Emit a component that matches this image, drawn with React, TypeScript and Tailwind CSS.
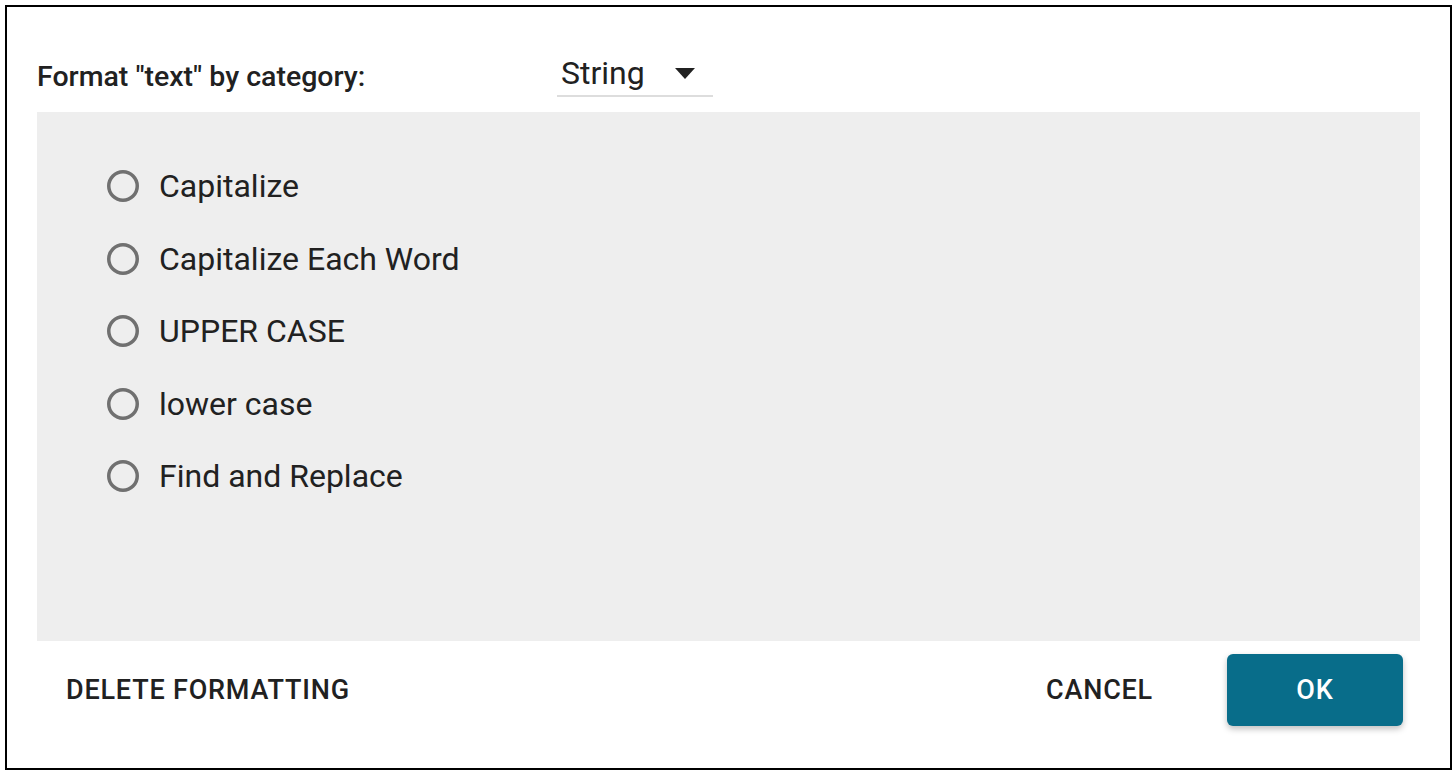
const options = ['Capitalize', 'Capitalize Each Word', 'UPPER CASE', 'lower case', 'Find and Replace'];

function RadioCircle() {
  return (
    <svg width="32" height="32" viewBox="0 0 32 32" className="shrink-0">
      <circle cx="16" cy="16" r="14.25" fill="none" stroke="#707070" strokeWidth="3.5" />
    </svg>
  );
}

export default function App() {
  return (
    <div
      className="h-screen w-full bg-white p-[5px] text-[#212121]"
      style={{ fontFamily: 'Roboto, "Liberation Sans", sans-serif' }}
    >
      <div className="flex h-[765px] w-[1447px] flex-col border-2 border-black">
        {/* header */}
        <div className="flex h-[105px] shrink-0 items-start pl-[30px]">
          <div className="mt-[53px] w-[520px] text-[28.5px] font-medium leading-[34px]">Format "text" by category:</div>
          <div className="mt-[44px] flex h-[46px] w-[156px] items-center border-b-2 border-[#dddddd] pl-1">
            <span className="flex-1 text-[32px] leading-[40px]">String</span>
            <svg width="20" height="12" viewBox="0 0 20 12" className="mr-[18px] mt-[2px] shrink-0">
              <path d="M0 0h20L10 11z" fill="#212121" />
            </svg>
          </div>
        </div>

        {/* options */}
        <div className="mx-[30px] h-[529px] shrink-0 bg-[#eeeeee] pl-[70px] pt-[38px]">
          {options.map((label) => (
            <div key={label} className="flex h-[72.5px] items-center gap-[20px]">
              <RadioCircle />
              <span className="text-[32px] leading-[40px]">{label}</span>
            </div>
          ))}
        </div>

        {/* footer */}
        <div className="flex flex-1 items-start pt-[13px] pr-[47px]">
          <div className="flex h-[72px] items-center pl-[59px] text-[27px] font-medium tracking-[0.8px]">
            DELETE FORMATTING
          </div>
          <div className="flex-1" />
          <div className="flex h-[72px] items-center text-[27px] font-medium tracking-[0.8px]">CANCEL</div>
          <button className="ml-[74px] flex h-[72px] w-[176px] items-center justify-center rounded-[6px] bg-[#086d8a] text-[27px] font-medium tracking-[0.8px] text-white shadow-[0_3px_6px_rgba(0,0,0,0.25)]">
            OK
          </button>
        </div>
      </div>
    </div>
  );
}
